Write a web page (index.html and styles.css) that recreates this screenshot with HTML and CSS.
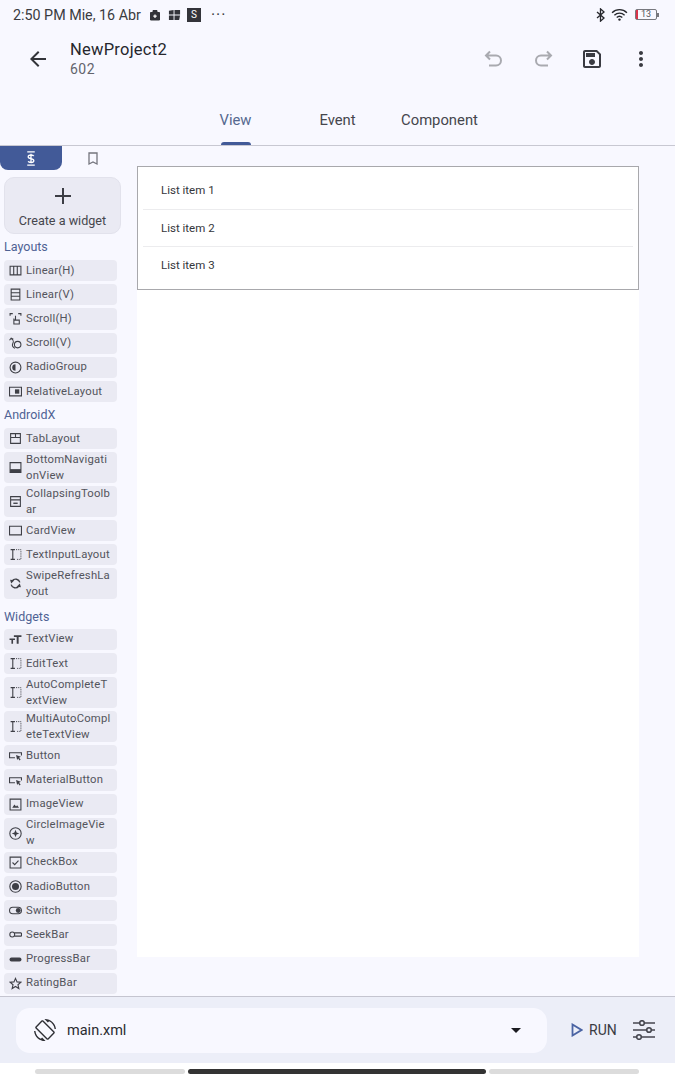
FILE: index.html
```html
<!DOCTYPE html>
<html lang="en">
<head>
  <meta charset="UTF-8" />
  <title>NewProject2 - View</title>
  <link rel="stylesheet" href="styles.css">
</head>
<body>
  <svg class="defs" width="0" height="0">
    <symbol id="i-input" viewBox="0 0 24 24"><path d="M3 3h8M3 21h8M7 3v18" fill="none" stroke="currentColor" stroke-width="2"/><path d="M13 3h9v18h-9" fill="none" stroke="currentColor" stroke-width="1.800" stroke-dasharray="2 2"/></symbol>
    <symbol id="i-button" viewBox="0 0 24 24"><path d="M11 16H1V7h22v5" fill="none" stroke="currentColor" stroke-width="2"/><path d="M13 11l9 3.500-3.500 1.500 3 3.500-2 1.500-2.500-3.500-2 3z" fill="currentColor"/></symbol>
  </svg>

  <!-- Status bar -->
  <div class="status-bar">
    <span class="status-time">2:50 PM Mie, 16 Abr</span>
    <svg class="status-icon" viewBox="0 0 12 12"><path d="M1.500 3.500h9V11h-9zM4 3.500V1.500h4v2" fill="#33343a" stroke="#33343a"/><path d="M6 5.500v3.500M4.300 7.200h3.400" stroke="#fff" stroke-width="1.200"/></svg>
    <svg class="status-icon wide" viewBox="0 0 14 12"><path d="M1 1.500l5-1v5H1zM7 .5h6v5H7zM1 6.500h5v5H1zM7 6.500h6l-1 5H7z" fill="#33343a"/></svg>
    <span class="status-s">S</span>
    <span class="status-more">···</span>
    <span class="status-right">
      <svg class="bt" viewBox="0 0 10 16"><path d="M1 4.500l8 7-4 3.500V1l4 3.500-8 7" fill="none" stroke="#26272c" stroke-width="1.500"/></svg>
      <svg class="wifi" viewBox="0 0 18 14"><path d="M1 5a11.500 11.500 0 0 1 16 0M3.500 7.700a8 8 0 0 1 11 0M6 10.200a4.400 4.400 0 0 1 6 0" fill="none" stroke="#26272c" stroke-width="1.500"/><circle cx="9" cy="12.500" r="1.300" fill="#26272c"/></svg>
      <span class="battery"><span class="battery-level"></span><span class="battery-text">13</span></span>
      <span class="battery-tip"></span>
    </span>
  </div>

  <!-- Toolbar -->
  <header class="toolbar">
    <svg class="back-icon" viewBox="0 0 24 24"><path d="M20 11H7.830l5.590-5.590L12 4l-8 8 8 8 1.410-1.410L7.830 13H20v-2z"/></svg>
    <div class="project-info">
      <div class="project-name">NewProject2</div>
      <div class="project-id">602</div>
    </div>
    <div class="toolbar-actions">
      <svg class="action disabled" viewBox="0 0 24 24"><path d="M8 4.500L4 8.500l4 4M4.500 8.500h9.500a5 5 0 0 1 0 10H7" fill="none" stroke="currentColor" stroke-width="2"/></svg>
      <svg class="action disabled" viewBox="0 0 24 24"><path d="M16 4.500l4 4-4 4M19.500 8.500H10a5 5 0 0 0 0 10h7" fill="none" stroke="currentColor" stroke-width="2"/></svg>
      <svg class="action" viewBox="0 0 24 24"><path d="M17 3H5c-1.110 0-2 .9-2 2v14c0 1.100.89 2 2 2h14c1.100 0 2-.9 2-2V7l-4-4zm2 16H5V5h11.170L19 7.830V19zm-7-7c-1.660 0-3 1.340-3 3s1.340 3 3 3 3-1.340 3-3-1.340-3-3-3zM6 6h9v4H6z" fill="currentColor"/></svg>
      <svg class="action" viewBox="0 0 24 24"><path d="M12 8c1.100 0 2-.9 2-2s-.9-2-2-2-2 .9-2 2 .9 2 2 2zm0 2c-1.100 0-2 .9-2 2s.9 2 2 2 2-.9 2-2-.9-2-2-2zm0 6c-1.100 0-2 .9-2 2s.9 2 2 2 2-.9 2-2-.9-2-2-2z" fill="currentColor"/></svg>
    </div>
  </header>

  <!-- Tabs -->
  <nav class="tabs">
    <div class="tab active">View</div>
    <div class="tab">Event</div>
    <div class="tab">Component</div>
  </nav>

  <main class="workspace">
    <!-- Palette -->
    <aside class="palette">
      <div class="palette-tabs">
        <div class="palette-tab selected">
          <svg viewBox="0 0 12 16"><path d="M2 1h8M2 15h8" stroke="#fff" stroke-width="1.400"/><path d="M9 5.500C8.500 4 3 3.500 3 6c0 3 6 1.500 6 4.500 0 2.500-5.500 2-6 .5M6 3v10" fill="none" stroke="#fff" stroke-width="1.400"/></svg>
        </div>
        <div class="palette-tab">
          <svg viewBox="0 0 12 14"><path d="M2 1.500h8v11L6 10.500 2 12.500z" fill="none" stroke="#74757e" stroke-width="1.300"/></svg>
        </div>
      </div>

      <div class="create-widget">
        <svg viewBox="0 0 20 20"><path d="M10 2v16M2 10h16" stroke="#3c3d44" stroke-width="2"/></svg>
        <span>Create a widget</span>
      </div>

      <div class="section-title">Layouts</div>
      <div class="item"><svg viewBox="0 0 24 24"><path d="M2 4h20v16H2zM8.700 4v16M15.300 4v16" fill="none" stroke="currentColor" stroke-width="2"/></svg><span>Linear(H)</span></div>
      <div class="item"><svg viewBox="0 0 24 24"><path d="M4 2h16v20H4zM4 8.700h16M4 15.300h16" fill="none" stroke="currentColor" stroke-width="2"/></svg><span>Linear(V)</span></div>
      <div class="item"><svg viewBox="0 0 24 24"><path d="M9 12v10h10v-7H9M12 15V7" fill="none" stroke="currentColor" stroke-width="2"/><path d="M2 7V3h5M17 3h5v4" fill="none" stroke="currentColor" stroke-width="2"/></svg><span>Scroll(H)</span></div>
      <div class="item"><svg viewBox="0 0 24 24"><circle cx="16" cy="14" r="6" fill="none" stroke="currentColor" stroke-width="2"/><path d="M4 3c5 3 5 5 3 9s0 7 4 9M1 6l3-4 4 2" fill="none" stroke="currentColor" stroke-width="2"/></svg><span>Scroll(V)</span></div>
      <div class="item"><svg viewBox="0 0 24 24"><circle cx="12" cy="12" r="10" fill="none" stroke="currentColor" stroke-width="2"/><path d="M12 6a6 6 0 0 0 0 12z" fill="currentColor"/></svg><span>RadioGroup</span></div>
      <div class="item"><svg viewBox="0 0 24 24"><path d="M1 4h22v16H1z" fill="none" stroke="currentColor" stroke-width="2"/><path d="M11 8h8v8h-8z" fill="currentColor"/></svg><span>RelativeLayout</span></div>

      <div class="section-title androidx">AndroidX</div>
      <div class="item"><svg viewBox="0 0 24 24"><path d="M3 3h18v18H3zM3 10h18M12 3v7" fill="none" stroke="currentColor" stroke-width="2"/></svg><span>TabLayout</span></div>
      <div class="item tall"><svg viewBox="0 0 24 24"><path d="M2 3h20v18H2z" fill="none" stroke="currentColor" stroke-width="2"/><path d="M2 15h20v6H2z" fill="currentColor"/></svg><span>BottomNavigati<br>onView</span></div>
      <div class="item tall"><svg viewBox="0 0 24 24"><path d="M3 3h18v18H3zM3 9h18" fill="none" stroke="currentColor" stroke-width="2"/><path d="M8 14h8v2.500H8z" fill="currentColor"/></svg><span>CollapsingToolb<br>ar</span></div>
      <div class="item"><svg viewBox="0 0 24 24"><path d="M1 4h22v16H1z" fill="none" stroke="currentColor" stroke-width="2"/></svg><span>CardView</span></div>
      <div class="item"><svg viewBox="0 0 24 24"><use href="#i-input"/></svg><span>TextInputLayout</span></div>
      <div class="item tall"><svg viewBox="0 0 24 24"><path d="M20 10a8 8 0 0 0-14-3M4 14a8 8 0 0 0 14 3" fill="none" stroke="currentColor" stroke-width="2.500"/><path d="M2 5l8 1-6 6zM22 19l-8-1 6-6z" fill="currentColor"/></svg><span>SwipeRefreshLa<br>yout</span></div>

      <div class="section-title widgets">Widgets</div>
      <div class="item"><svg viewBox="0 0 24 24"><path d="M9 4h14v3.500h-5.200V20h-3.600V7.500H9zM1 10h10v3H7.500v7h-3v-7H1z" fill="currentColor"/></svg><span>TextView</span></div>
      <div class="item"><svg viewBox="0 0 24 24"><use href="#i-input"/></svg><span>EditText</span></div>
      <div class="item tall"><svg viewBox="0 0 24 24"><use href="#i-input"/></svg><span>AutoCompleteT<br>extView</span></div>
      <div class="item tall"><svg viewBox="0 0 24 24"><use href="#i-input"/></svg><span>MultiAutoCompl<br>eteTextView</span></div>
      <div class="item"><svg viewBox="0 0 24 24"><use href="#i-button"/></svg><span>Button</span></div>
      <div class="item"><svg viewBox="0 0 24 24"><use href="#i-button"/></svg><span>MaterialButton</span></div>
      <div class="item"><svg viewBox="0 0 24 24"><path d="M2 2h20v20H2z" fill="none" stroke="currentColor" stroke-width="2"/><path d="M6 18l4-6 3 3.500 2-2 3.500 4.500z" fill="currentColor"/></svg><span>ImageView</span></div>
      <div class="item tall"><svg viewBox="0 0 24 24"><circle cx="12" cy="12" r="10.500" fill="none" stroke="currentColor" stroke-width="2"/><path d="M12 5l2 5 5 2-5 2-2 5-2-5-5-2 5-2z" fill="currentColor"/></svg><span>CircleImageVie<br>w</span></div>
      <div class="item"><svg viewBox="0 0 24 24"><path d="M2 2h20v20H2z" fill="none" stroke="currentColor" stroke-width="2"/><path d="M6.500 12l4 4L17.500 8.500" fill="none" stroke="currentColor" stroke-width="2"/></svg><span>CheckBox</span></div>
      <div class="item"><svg viewBox="0 0 24 24"><circle cx="12" cy="12" r="10.500" fill="none" stroke="currentColor" stroke-width="2"/><circle cx="12" cy="12" r="6.500" fill="currentColor"/></svg><span>RadioButton</span></div>
      <div class="item"><svg viewBox="0 0 24 24"><rect x="1" y="6" width="22" height="12" rx="6" fill="none" stroke="currentColor" stroke-width="2"/><circle cx="17" cy="12" r="4.500" fill="currentColor"/></svg><span>Switch</span></div>
      <div class="item"><svg viewBox="0 0 24 24"><circle cx="6" cy="12" r="4.500" fill="none" stroke="currentColor" stroke-width="2"/><path d="M10 9h13M10 15h13M23 9v6" fill="none" stroke="currentColor" stroke-width="2"/></svg><span>SeekBar</span></div>
      <div class="item"><svg viewBox="0 0 24 24"><rect x="1" y="8.500" width="22" height="7" rx="3.500" fill="currentColor"/></svg><span>ProgressBar</span></div>
      <div class="item"><svg viewBox="0 0 24 24"><path d="M12 2.500l2.800 6.500 7.200.6-5.500 4.700 1.700 7L12 17.500 5.800 21.300l1.700-7L2 9.600 9.200 9z" fill="none" stroke="currentColor" stroke-width="2"/></svg><span>RatingBar</span></div>
    </aside>

    <!-- Canvas -->
    <section class="canvas-area">
      <div class="canvas">
        <div class="list-view">
          <div class="list-row">List item 1</div>
          <div class="list-row">List item 2</div>
          <div class="list-row">List item 3</div>
        </div>
      </div>
    </section>
  </main>

  <!-- Bottom bar -->
  <footer class="bottom-bar">
    <div class="file-picker">
      <svg class="rotate-icon" viewBox="0 0 24 24"><path d="M16.480 2.520c3.270 1.550 5.610 4.720 5.970 8.480h1.500C23.440 4.840 18.290 0 12 0l-.66.03 3.810 3.810 1.330-1.320zm-6.250-.77c-.59-.59-1.540-.59-2.120 0L1.750 8.110c-.59.59-.59 1.540 0 2.120l12.020 12.020c.59.59 1.540.59 2.120 0l6.360-6.360c.59-.59.59-1.540 0-2.120L10.230 1.750zm4.600 19.440L2.810 9.170l6.360-6.360 12.020 12.020-6.360 6.360zm-7.310.29C4.250 19.940 1.910 16.760 1.550 13H.05C.56 19.160 5.710 24 12 24l.66-.03-3.810-3.810-1.330 1.320z" fill="#2e2f35"/></svg>
      <span class="file-name">main.xml</span>
      <span class="file-caret"></span>
    </div>
    <div class="run-button">
      <svg viewBox="0 0 12 14"><path d="M1.500 1.500L10.500 7l-9 5.500z" fill="none" stroke="#4a63a3" stroke-width="1.800"/></svg>
      <span>RUN</span>
    </div>
    <svg class="tune-icon" viewBox="0 0 22 20"><path d="M0 3h22M0 10h22M0 17h22" stroke="#45464f" stroke-width="1.600"/><circle cx="9" cy="3" r="2.300" fill="#eceef8" stroke="#45464f" stroke-width="1.600"/><circle cx="16" cy="10" r="2.300" fill="#eceef8" stroke="#45464f" stroke-width="1.600"/><circle cx="6" cy="17" r="2.300" fill="#eceef8" stroke="#45464f" stroke-width="1.600"/></svg>
  </footer>

  <!-- Gesture bar -->
  <div class="gesture-bar">
    <span class="gesture side"></span>
    <span class="gesture main-pill"></span>
    <span class="gesture side"></span>
  </div>
</body>
</html>
```

FILE: styles.css
```css
* {
  box-sizing: border-box;
}
body {
  margin: 0;
  width: 675px;
  height: 1080px;
  overflow: hidden;
  background-color: #f8f8ff;
  color: #1b1b21;
  font-family: Roboto, "Noto Sans", sans-serif;
  display: flex;
  flex-direction: column;
}
.defs {
  position: absolute;
}

/* status bar */
.status-bar {
  height: 28px;
  padding: 1px 16px 0 13px;
  display: flex;
  align-items: center;
  font-size: 14.300px;
  color: #3a3b40;
}
.status-time {
  margin-right: 8px;
}
.status-icon {
  width: 12px;
  height: 12px;
  margin-right: 7px;
}
.status-icon.wide {
  width: 13px;
  margin-right: 6px;
}
.status-s {
  width: 14px;
  height: 14px;
  background-color: #33343a;
  color: #fff;
  font-size: 10px;
  text-align: center;
  line-height: 14px;
  margin-right: 10px;
}
.status-more {
  font-size: 16px;
  letter-spacing: 1px;
}
.status-right {
  margin-left: auto;
  display: flex;
  align-items: center;
}
.bt {
  width: 9px;
  height: 14px;
  margin-right: 6px;
}
.wifi {
  width: 17px;
  height: 13px;
  margin-right: 7px;
}
.battery {
  position: relative;
  width: 22px;
  height: 11px;
  border: 1px solid #77787e;
  border-radius: 2px;
  display: flex;
  font-size: 9px;
  line-height: 9px;
  color: #55565c;
}
.battery-level {
  width: 2px;
  background-color: #d8344a;
}
.battery-text {
  margin-left: 3px;
}
.battery-tip {
  width: 2px;
  height: 4px;
  background-color: #77787e;
}

/* toolbar */
.toolbar {
  height: 62px;
  display: flex;
  align-items: center;
  padding-left: 26px;
}
.back-icon {
  width: 24px;
  height: 24px;
  fill: #33343a;
}
.project-info {
  margin-left: 20px;
}
.project-name {
  font-size: 16.500px;
  line-height: 20px;
  letter-spacing: .25px;
  color: #26272d;
}
.project-id {
  font-size: 14px;
  line-height: 18px;
  color: #63646c;
  letter-spacing: .5px;
}
.toolbar-actions {
  margin-left: auto;
  margin-right: 22px;
  display: flex;
  gap: 25px;
}
.action {
  width: 24px;
  height: 24px;
  color: #3a3b42;
}
.action.disabled {
  color: #a9aab0;
}

/* tabs */
.tabs {
  height: 56px;
  padding-top: 10px;
  display: flex;
  justify-content: center;
  border-bottom: 1px solid #c8c8d2;
}
.tab {
  width: 102px;
  text-align: center;
  font-size: 14.800px;
  line-height: 40px;
  color: #45464d;
  position: relative;
}
.tab.active {
  color: #55688f;
}
.tab.active::after {
  content: "";
  position: absolute;
  left: 36px;
  right: 36px;
  bottom: 0;
  height: 3px;
  background-color: #425a98;
  border-radius: 3px 3px 0 0;
}

/* main area */
.workspace {
  flex: 1;
  display: flex;
  min-height: 0;
}
.palette {
  width: 125px;
  flex-shrink: 0;
}
.palette-tabs {
  display: flex;
  height: 24px;
  width: 124px;
}
.palette-tab {
  flex: 1;
  display: flex;
  align-items: center;
  justify-content: center;
  border-radius: 0 0 8px 8px;
}
.palette-tab.selected {
  background-color: #425a98;
}
.palette-tab svg {
  width: 12px;
  height: 15px;
}
.create-widget {
  margin: 7px 4px 0;
  height: 57px;
  background-color: #eaeaf3;
  border: 1px solid #e2e2ec;
  border-radius: 10px;
  display: flex;
  flex-direction: column;
  align-items: center;
  font-size: 12.600px;
  color: #45464d;
}
.create-widget svg {
  width: 20px;
  height: 20px;
  margin-top: 8px;
}
.create-widget span {
  margin-top: 7px;
}
.section-title {
  height: 26px;
  padding: 5px 0 0 4px;
  font-size: 12.500px;
  line-height: 16px;
  color: #4f6294;
}
.section-title.androidx {
  height: 22.800px;
  padding-top: 2px;
}
.section-title.widgets {
  height: 26.400px;
  padding-top: 7px;
}
.item {
  display: flex;
  align-items: center;
  height: 21.200px;
  margin: 0 8px 3px 4px;
  padding-left: 5px;
  background-color: #eaeaf3;
  border-radius: 4px;
  font-size: 11.300px;
  line-height: 16px;
  letter-spacing: .2px;
  color: #53545c;
  white-space: nowrap;
}
.item.tall {
  height: 31px;
}
.item svg {
  width: 13px;
  height: 13px;
  margin-right: 4px;
  flex-shrink: 0;
  color: #3e3f46;
}

/* canvas */
.canvas-area {
  flex: 1;
  padding: 20px 36px 39px 12px;
}
.canvas {
  height: 100%;
  background-color: #fff;
}
.list-view {
  border: 1px solid #a8a8ac;
  height: 124px;
  padding: 5px;
}
.list-row {
  height: 37.500px;
  padding-left: 18px;
  font-size: 11.500px;
  line-height: 37.500px;
  color: #35363b;
  border-bottom: 1px solid #ececee;
}
.list-row:last-child {
  border-bottom: none;
}

/* bottom bar */
.bottom-bar {
  height: 67px;
  background-color: #eceef8;
  border-top: 1px solid #c5c5d0;
  display: flex;
  align-items: center;
  padding: 0 20px 0 16px;
}
.file-picker {
  width: 531px;
  height: 45px;
  background-color: #f8f8ff;
  border-radius: 14px;
  display: flex;
  align-items: center;
  padding: 0 26px 0 18px;
}
.rotate-icon {
  width: 22px;
  height: 22px;
}
.file-name {
  margin-left: 11px;
  font-size: 14.500px;
  color: #2a2b30;
}
.file-caret {
  margin-left: auto;
  border-left: 5px solid transparent;
  border-right: 5px solid transparent;
  border-top: 5px solid #1b1b21;
}
.run-button {
  display: flex;
  align-items: center;
  margin-left: 24px;
  font-size: 14px;
  color: #3a3b42;
}
.run-button svg {
  width: 12px;
  height: 14px;
  margin-right: 6px;
}
.tune-icon {
  width: 22px;
  height: 20px;
  margin-left: auto;
}

/* gesture bar */
.gesture-bar {
  height: 17px;
  background-color: #fff;
  display: flex;
  justify-content: center;
  gap: 3px;
  padding: 6px 2px 0 0;
}
.gesture {
  height: 5px;
  border-radius: 3px;
}
.gesture.side {
  width: 150px;
  background-color: #dcdcdc;
}
.gesture.main-pill {
  width: 298px;
  background-color: #333;
}
```
